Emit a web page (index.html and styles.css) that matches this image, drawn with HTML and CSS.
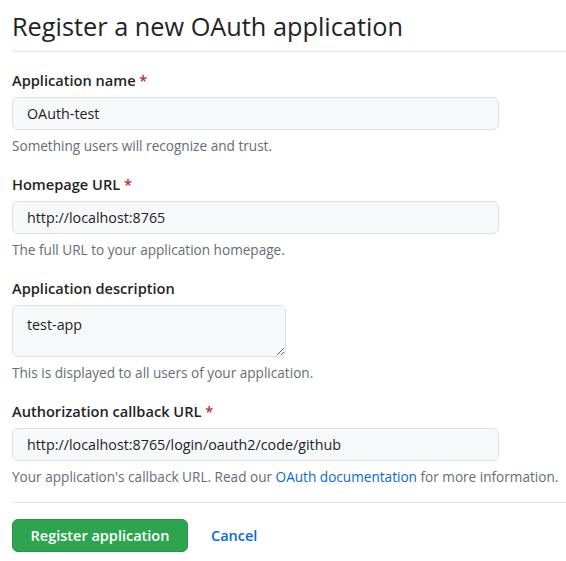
FILE: index.html
```html
<!DOCTYPE html>
<html lang="en">
<head>
<meta charset="utf-8">
<title>Register a new OAuth application</title>
<link rel="stylesheet" href="styles.css">
</head>
<body>
<div class="page">
  <div class="subhead">
    <h1 class="subhead-heading">Register a new OAuth application</h1>
  </div>
  <form class="form">
    <div class="form-group">
      <label class="label">Application name <span class="req">*</span></label>
      <input class="input" type="text" value="OAuth-test">
      <p class="note">Something users will recognize and trust.</p>
    </div>
    <div class="form-group">
      <label class="label">Homepage URL <span class="req">*</span></label>
      <input class="input" type="text" value="http://localhost:8765">
      <p class="note">The full URL to your application homepage.</p>
    </div>
    <div class="form-group">
      <label class="label">Application description</label>
      <textarea class="textarea">test-app</textarea>
      <p class="note">This is displayed to all users of your application.</p>
    </div>
    <div class="form-group">
      <label class="label">Authorization callback URL <span class="req">*</span></label>
      <input class="input" type="text" value="http://localhost:8765/login/oauth2/code/github">
      <p class="note">Your application's callback URL. Read our <a class="link" href="#">OAuth documentation</a> for more information.</p>
    </div>
    <div class="actions">
      <button class="btn-primary" type="button">Register application</button>
      <a class="cancel" href="#">Cancel</a>
    </div>
  </form>
</div>
</body>
</html>
```

FILE: styles.css
```css
* { box-sizing: border-box; }
html, body { margin: 0; padding: 0; background: #ffffff; }
body {
  font-family: "Open Sans", "Noto Sans", "Liberation Sans", sans-serif;
  color: #1f2328;
}
.page { padding: 0 0 0 12px; }
.subhead {
  padding-top: 9px;
  padding-bottom: 8px;
  border-bottom: 1px solid #e4e7ea;
}
.subhead-heading {
  margin: 0;
  font-size: 25.3px;
  font-weight: 400;
  line-height: 34px;
  color: #1f2328;
}
.form { display: flex; flex-direction: column; }
.form-group {
  display: flex;
  flex-direction: column;
  align-items: flex-start;
  margin-top: 18px;
}
.form-group + .form-group { margin-top: 19px; }
.label {
  font-size: 14.6px;
  font-weight: 600;
  line-height: 20px;
  margin-bottom: 7px;
}
.req { color: #cf222e; }
.input {
  width: 487px;
  height: 33px;
  padding: 5px 14px;
  font: inherit;
  font-size: 14.3px;
  color: #1f2328;
  background: #f6f8fa;
  border: 1px solid #dde1e5;
  border-radius: 6px;
  outline: none;
}
.textarea {
  width: 274px;
  height: 52px;
  padding: 9px 14px 5px;
  font: inherit;
  font-size: 14.3px;
  line-height: 20px;
  color: #1f2328;
  background: #f6f8fa;
  border: 1px solid #dde1e5;
  border-radius: 6px;
  outline: none;
  resize: vertical;
}
.note {
  margin: 7px 0 0;
  font-size: 13.6px;
  line-height: 18px;
  color: #656d76;
}
.link { color: #0969da; text-decoration: none; }
.actions {
  display: flex;
  align-items: center;
  gap: 23px;
  margin-top: 16px;
  padding-top: 16px;
  border-top: 1px solid #e4e7ea;
}
.btn-primary {
  width: 176px;
  height: 33px;
  font: inherit;
  font-size: 14.5px;
  font-weight: 600;
  color: #ffffff;
  background: #2da44e;
  border: 1px solid #2a9147;
  border-radius: 6px;
}
.cancel {
  font-size: 14.5px;
  font-weight: 600;
  color: #0969da;
  text-decoration: none;
}
```
